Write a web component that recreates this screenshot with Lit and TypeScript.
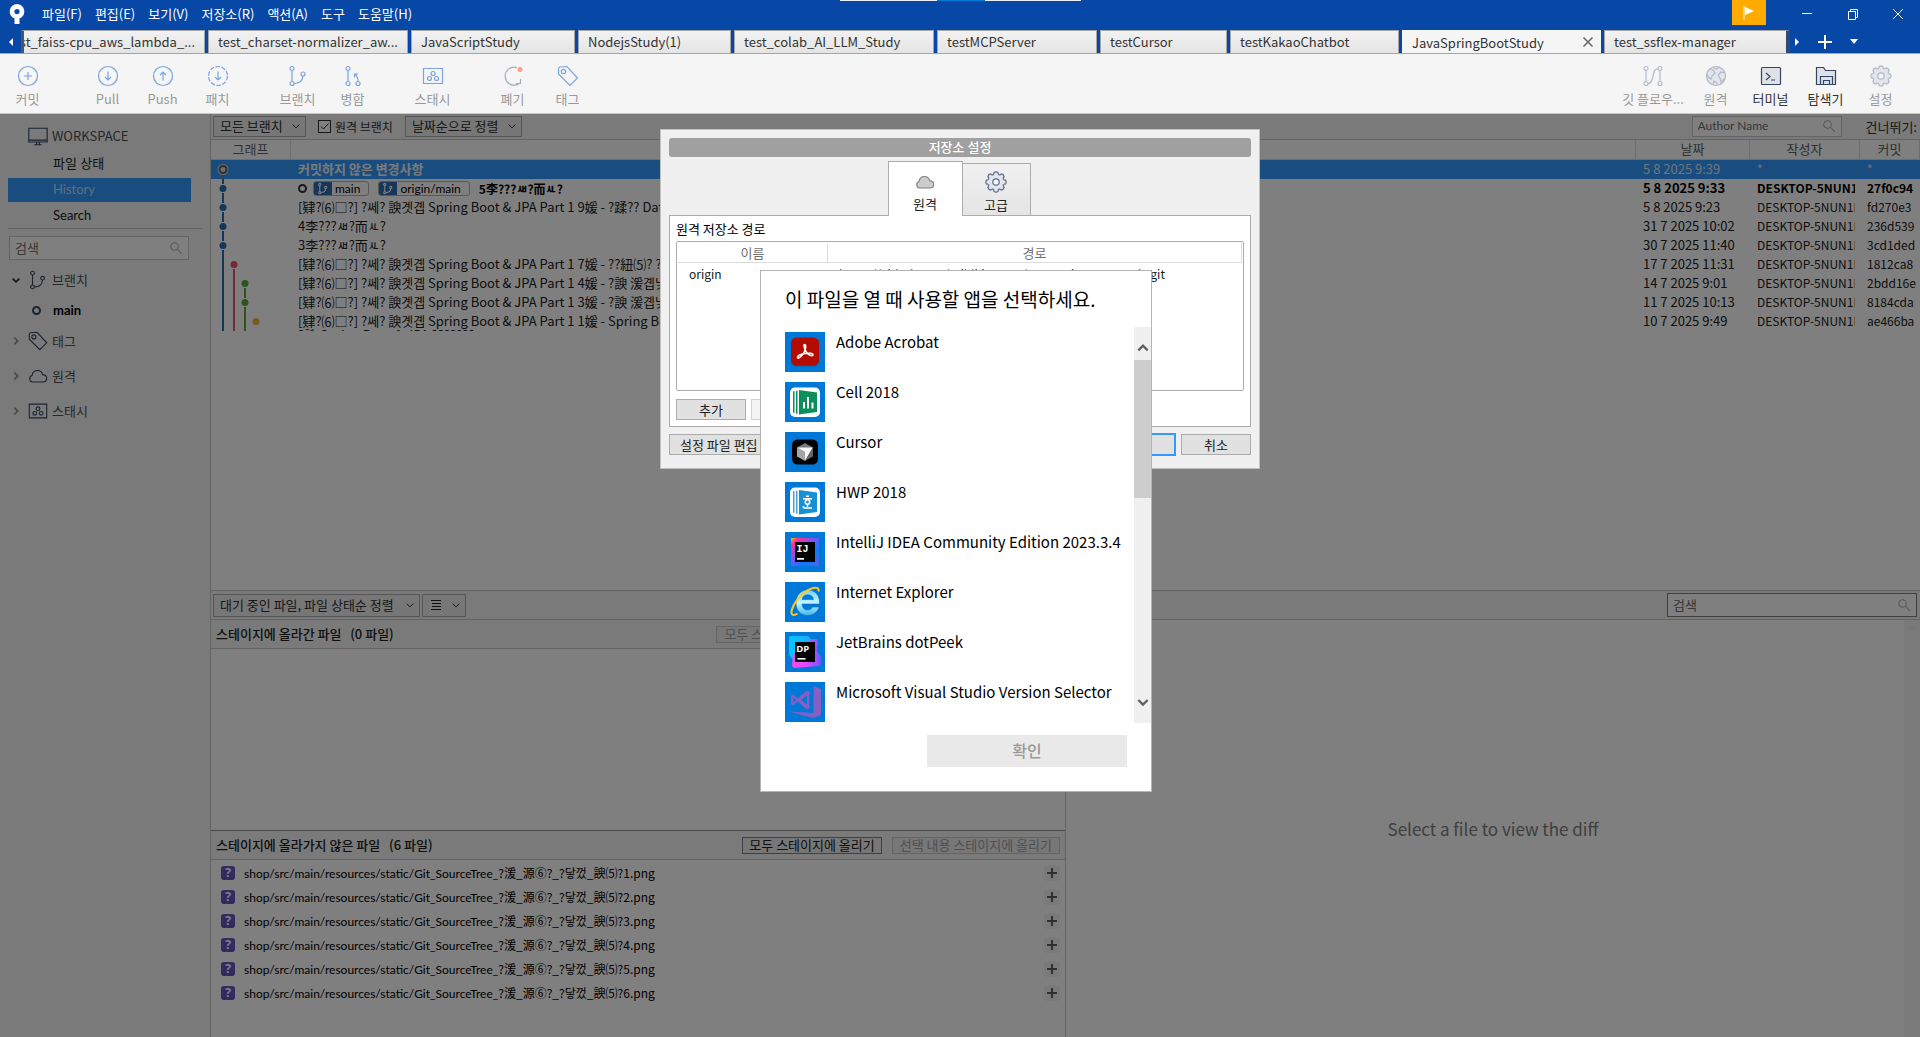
import { LitElement, html, css, svg, nothing } from "lit";
import { customElement } from "lit/decorators.js";
import { classMap } from "lit/directives/class-map.js";

/* ---------- data ---------- */

const MENUS = ["파일(F)", "편집(E)", "보기(V)", "저장소(R)", "액션(A)", "도구", "도움말(H)"];

const TABS = [
  { name: "test_faiss-cpu_aws_lambda_...", width: 184, clipped: true },
  { name: "test_charset-normalizer_aw...", width: 200 },
  { name: "JavaScriptStudy", width: 164 },
  { name: "NodejsStudy(1)", width: 153 },
  { name: "test_colab_AI_LLM_Study", width: 200 },
  { name: "testMCPServer", width: 160 },
  { name: "testCursor", width: 127 },
  { name: "testKakaoChatbot", width: 169 },
  { name: "JavaSpringBootStudy", width: 199, active: true },
  { name: "test_ssflex-manager", width: 186, last: true },
];

const LEFT_TOOLS = [
  [{ icon: "commit", label: "커밋" }],
  [
    { icon: "pull", label: "Pull" },
    { icon: "push", label: "Push" },
    { icon: "fetch", label: "패치" },
  ],
  [
    { icon: "branch", label: "브랜치" },
    { icon: "merge", label: "병합" },
  ],
  [{ icon: "stash", label: "스태시" }],
  [
    { icon: "discard", label: "폐기" },
    { icon: "tag", label: "태그" },
  ],
];

const RIGHT_TOOLS = [
  { icon: "flow", label: "깃 플로우...", wide: true },
  { icon: "globe", label: "원격" },
  { icon: "terminal", label: "터미널", on: true },
  { icon: "explorer", label: "탐색기", on: true },
  { icon: "gear", label: "설정" },
];

const PREFIX = "[肄?⑹□?] ?쎄? 諛곗곕 Spring Boot & JPA Part 1 ";
const COMMITS = [
  { text: "커밋하지 않은 변경사항", date: "5 8 2025 9:39", author: "*", hash: "*", kind: "selected" },
  { text: "5李???ㅽ?而ㅻ?", date: "5 8 2025 9:33", author: "DESKTOP-5NUN1IQ", hash: "27f0c94", kind: "head" },
  { text: PREFIX + "9媛 - ?蹂?? Database", date: "5 8 2025 9:23", author: "DESKTOP-5NUN1IQ", hash: "fd270e3" },
  { text: "4李???ㅽ?而ㅻ?", date: "31 7 2025 10:02", author: "DESKTOP-5NUN1IQ", hash: "236d539" },
  { text: "3李???ㅽ?而ㅻ?", date: "30 7 2025 11:40", author: "DESKTOP-5NUN1IQ", hash: "3cd1ded" },
  { text: PREFIX + "7媛 - ??紐⑸? ??댁", date: "17 7 2025 11:31", author: "DESKTOP-5NUN1IQ", hash: "1812ca8" },
  { text: PREFIX + "4媛 - ?諛 湲곕낯 ?", date: "14 7 2025 9:01", author: "DESKTOP-5NUN1IQ", hash: "2bdd16e" },
  { text: PREFIX + "3媛 - ?諛 湲곕낯 ?", date: "11 7 2025 10:13", author: "DESKTOP-5NUN1IQ", hash: "8184cda" },
  { text: PREFIX + "1媛 - Spring Boot", date: "10 7 2025 9:49", author: "DESKTOP-5NUN1IQ", hash: "ae466ba" },
];

const LANES = [
  { x: 12, color: "#2f6fb5" },
  { x: 23, color: "#e8536a" },
  { x: 34, color: "#5aa83f" },
  { x: 45, color: "#f2b93b" },
];
const COMMIT_LANE = [0, 0, 0, 0, 0, 1, 2, 2, 3];

const FILES = [1, 2, 3, 4, 5, 6].map((n) => ({
  dir: "shop/src/main/resources/static/Git_SourceTree_",
  tail: `?湲_源⑥?_?닿껐_諛⑸?${n}.png`,
}));

const APPS = [
  { name: "Adobe Acrobat", icon: "acrobat" },
  { name: "Cell 2018", icon: "cell" },
  { name: "Cursor", icon: "cursor" },
  { name: "HWP 2018", icon: "hwp" },
  { name: "IntelliJ IDEA Community Edition 2023.3.4", icon: "idea" },
  { name: "Internet Explorer", icon: "ie" },
  { name: "JetBrains dotPeek", icon: "dotpeek" },
  { name: "Microsoft Visual Studio Version Selector", icon: "vs" },
];

/* ---------- icons ---------- */

const gearPath = (() => {
  let d = "";
  const n = 8;
  for (let i = 0; i < n; i++) {
    const a = (i / n) * Math.PI * 2 - Math.PI / 2;
    const p = (r: number, o: number) =>
      `${(12 + r * Math.cos(a + o)).toFixed(2)} ${(12 + r * Math.sin(a + o)).toFixed(2)}`;
    d += `${i ? "L" : "M"}${p(9.8, -0.2)}Q${p(10.8, 0)} ${p(9.8, 0.2)}L${p(8.4, 0.27)}Q${p(7.4, 0.39)} ${p(8.4, 0.52)}`;
  }
  return d + "Z";
})();

const GLYPHS: Record<string, unknown> = {
  commit: svg`<circle cx="12" cy="12" r="9.5"/><path d="M12 8v8M8 12h8"/>`,
  pull: svg`<circle cx="12" cy="12" r="9.5"/><path d="M12 7.5v8.5M9 13l3 3 3-3"/>`,
  push: svg`<circle cx="12" cy="12" r="9.5"/><path d="M12 16.5V8M9 11l3-3 3 3"/>`,
  fetch: svg`<circle cx="12" cy="12" r="9.5" stroke-dasharray="4.5 1.5"/><path d="M12 7.5v8.5M9 13l3 3 3-3"/>`,
  branch: svg`<circle cx="6" cy="4.5" r="2"/><circle cx="6" cy="19.5" r="2"/><circle cx="17" cy="10" r="2"/><path d="M6 6.500v11M8 19.500c5 0 8.500-2 9-7.500"/>`,
  merge: svg`<circle cx="7" cy="4.500" r="2"/><circle cx="7" cy="19.500" r="2"/><circle cx="17" cy="19.500" r="2"/><path d="M7 6.500v11M17 17.500c0-4-1-6-3.500-7.500M13.500 13.500V10H17"/>`,
  stash: svg`<path d="M2.500 4.500h19v15h-19z"/><circle cx="12" cy="9.500" r="2"/><circle cx="8.500" cy="14.500" r="2"/><circle cx="15.500" cy="14.500" r="2"/>`,
  discard: svg`<path d="M16 3.600A9 9 0 1 0 19 19M19.500 15v4.500H15" stroke="#a5adba"/><circle cx="19" cy="5.500" r="2.500" fill="#ff9c8a" stroke="none"/>`,
  tag: svg`<path d="M2.500 4.500l1-1.500 7.500-.5 10.500 11.500-7.500 7.500L2.500 10z"/><circle cx="7.500" cy="7.500" r="2.200"/>`,
  flow: svg`<circle cx="5" cy="4.500" r="2"/><circle cx="5" cy="19.500" r="2"/><circle cx="19" cy="4.500" r="2"/><circle cx="19" cy="19.500" r="2"/><path d="M5 6.500v11M19 6.500v11M7 19.500c7 0 3-15 10-15"/>`,
  globe: svg`<circle cx="12" cy="12" r="9.500" fill="#e1e5ec"/><path d="M6 5l3 1 2 3-3 3-1 3-3-2-1-3M9 3l3 2 4-2M21 9l-4-1-3 3 2 3 1 4 3-3M9 21l1-4 3 2 0 2"/>`,
  terminal: svg`<rect x="2.500" y="3.500" width="19" height="17" rx="1" fill="#dfe1e9"/><path d="M7 9l4 3.500L7 16M12 16h4"/>`,
  explorer: svg`<path d="M2.500 20.500v-17h7l2 3h10v14z" fill="#dfe1e9"/><path d="M6.500 20.500v-8h12v8M9.500 20.500v-4h6v4"/>`,
  gear: svg`<path d=${gearPath} fill="#e1e5ec"/><circle cx="12" cy="12" r="3.200" fill="#f5f5f5"/>`,
  monitor: svg`<path d="M2 3.500h20v15H2zM2 16.500h20M10.500 18.500v2.500M13.500 18.500v2.500M8 21.500h8"/>`,
  cloud: svg`<path d="M6 18.500a3.600 3.600 0 0 1-.5-7C6 7.500 9 6 11.500 6c3 0 5 2 5.500 4.500 3 .2 4.500 2 4.500 4s-1.500 4-4 4z"/>`,
  search: svg`<circle cx="9.500" cy="9.500" r="6.500"/><path d="M14.500 14.500L22 22"/>`,
  down: svg`<path d="M4 8.500l8 8 8-8"/>`,
  right: svg`<path d="M8 4l8 8-8 8"/>`,
  up: svg`<path d="M4 16l8-8 8 8"/>`,
};

const icon = (name: string, cls = "") =>
  html`<svg class="icon ${cls}" viewBox="0 0 24 24" aria-hidden="true">${GLYPHS[name]}</svg>`;

const BOOK = (main: string, light: string) => svg`
  <rect x="5" y="5.500" width="30" height="29.500" rx="5" fill="#fff"/>
  <path d="M8 9.500l1.500-.5v22L8 30.500zM11 9l1.500-.5v23.500l-1.500-.5z" fill=${light}/>
  <path d="M14 8l18 2.500V30l-18 2.500z" fill=${main}/>`;

const APP_ART: Record<string, unknown> = {
  acrobat: svg`
    <rect x="6" y="6.500" width="28" height="28" rx="5.500" fill="#06427f" opacity=".5"/>
    <rect x="6" y="5.500" width="28" height="28" rx="5.500" fill="#b30b00"/>
    <path d="M19.500 12.500c2.200 0 1.200 6-1.500 9.500s-5.300 5-5.500 3.500c-.2-2 4.500-3.500 8-4 4-.6 7.500-.3 7.500 1.300 0 1.700-3.500.7-5.500-1.300-2.700-2.500-4.300-9-3-9z" fill="none" stroke="#fff" stroke-width="1.600"/>`,
  cell: svg`${BOOK("#0b8f5a", "#0b8f5a")}<path d="M18 20h2v6.500h-2zM22 15h2v11.500h-2zM26.500 20.500h2v6h-2z" fill="#fff"/>`,
  cursor: svg`
    <rect x="7" y="7.500" width="26" height="25" rx="5.500" fill="#000"/>
    <path d="M20 11l8 4.500-8 4.500-8-4.500z" fill="#777"/>
    <path d="M12 15.500l8 4.500v9l-8-4.500z" fill="#a5a5a5"/>
    <path d="M28 15.500L20 29v-9l-8-4.500z" fill="#f5f5f5"/>
    <path d="M28 15.500v9L20 29z" fill="#666"/>`,
  hwp: svg`${BOOK("#1791d3", "#4a9fd8")}
    <path d="M21 14.200h3M18 16.700h9M18.500 26h8.500M18.500 24v2M22.500 23v2" stroke="#fff" stroke-width="1.500" fill="none"/>
    <circle cx="22.500" cy="20" r="2.200" stroke="#fff" stroke-width="1.600" fill="none"/>`,
  idea: svg`
    <defs><linearGradient id="ij" x1="0" y1="0" x2="1" y2="1">
      <stop offset="0" stop-color="#fdb60d"/><stop offset=".14" stop-color="#ff318c"/>
      <stop offset=".45" stop-color="#6b57ff"/><stop offset=".7" stop-color="#087cfa"/><stop offset="1" stop-color="#5f5ce6"/>
    </linearGradient></defs>
    <path d="M6 6h28v28H6z" fill="url(#ij)"/><path d="M10 10h20v20H10z" fill="#000"/>
    <text x="11.500" y="20" font-size="10" font-weight="700" font-family="Liberation Mono" fill="#fff">IJ</text>
    <path d="M12 26h7v1.700h-7z" fill="#fff"/>`,
  ie: svg`
    <defs><linearGradient id="ieg" x1="0" y1="0" x2="0" y2="1">
      <stop offset="0" stop-color="#6fd6fb"/><stop offset=".5" stop-color="#c3f3ff"/><stop offset="1" stop-color="#3fb7f0"/></linearGradient></defs>
    <path d="M34.500 22H17c.3 4 2.500 6 5.500 6 2.300 0 4-1 5-3h6.500c-1.500 5.500-6 8.500-11.500 8.500C15.500 33.500 11 28.500 11 21S15.500 8 22.500 8c7.500 0 12.500 5 12 14zM17 17.500h11.500c-.3-3-2.500-4.800-5.700-4.800S17.500 14.500 17 17.500z" fill="url(#ieg)" stroke="#1a74bd" stroke-width=".6"/>
    <path d="M33.500 9.500c1-4-2.500-4.800-8-2.500C17 10.500 9 20 6.800 28c-1.200 5 1.500 6.500 5.700 3.500" fill="none" stroke="#fdc81e" stroke-width="2"/>`,
  dotpeek: svg`
    <defs><linearGradient id="dpa" x1="0" y1="0" x2="1" y2="0"><stop offset="0" stop-color="#00c8ff"/><stop offset="1" stop-color="#22a8ff"/></linearGradient>
    <linearGradient id="dpb" x1="0" y1="0" x2="1" y2="0"><stop offset="0" stop-color="#ff45ed"/><stop offset=".5" stop-color="#e04bff"/><stop offset="1" stop-color="#6b57ff"/></linearGradient></defs>
    <path d="M4 5.500q0-1.500 2-1.500h17l3 3v20H7l-3-5z" fill="url(#dpa)"/>
    <path d="M24 9l3-2h5l1 3-1 9 4 6v8l-2 1-25 2-2-2 1-12 16-5z" fill="url(#dpb)"/>
    <path d="M10 10h20v20H10z" fill="#000"/>
    <text x="11.300" y="19.500" font-size="9.500" font-weight="700" font-family="Open Sans" fill="#fff">DP</text>
    <path d="M12.500 26h8v1.600h-8z" fill="#fff"/>`,
  vs: svg`<path d="M28.500 4l7.500 3v26l-8 3L4 29.500l24.500 1.500zM6 13.500l2-1 5 4 8.500-8 3 1.200v16.600l-3 1.200-8.500-8-5 4-2-1zM8.500 15.500v5l2.500-2.500zM16 18l6 4.500v-9z" fill="#865fc5" fill-rule="evenodd"/>`,
};

/* ---------- component ---------- */

@customElement("app-root")
export class AppRoot extends LitElement {
  static styles = css`
    :host {
      display: block;
      font: 13px/17px "Noto Sans CJK KR", "Noto Sans", sans-serif;
      color: #000;
    }
    * { box-sizing: border-box; }
    button, input, select { font: inherit; color: inherit; margin: 0; padding: 0; border: 0; border-radius: 0; background: none; }
    button { white-space: nowrap; }
    a { color: inherit; text-decoration: none; }
    h1, h2, p, ul { margin: 0; padding: 0; font-size: inherit; font-weight: inherit; }
    ul { list-style: none; }
    table { border-collapse: separate; border-spacing: 0; table-layout: fixed; width: 100%; }
    th, td { padding: 0; font-weight: 400; text-align: left; white-space: nowrap; overflow: hidden; }
    .icon { display: block; width: 24px; height: 24px; flex: none; fill: none; stroke: currentColor; stroke-width: 1.2; }
    .small { width: 12px; height: 12px; stroke-width: 2.4; }
    .latin { font-family: Lato, "Noto Sans CJK KR", sans-serif; }
    .app { position: relative; display: flex; flex-direction: column; height: 100vh; overflow: hidden; background: #fff; }

    /* title bar */
    .titlebar { display: flex; align-items: stretch; height: 30px; background: #0747a6; color: #fff; }
    .logo { width: 18px; height: 22px; margin: 3px 16px 0 8px; }
    .menus { display: flex; gap: 13px; align-items: center; height: 26px; }
    .grip { display: flex; width: 241px; height: 1px; margin-left: auto; background: #e8ecf4; justify-content: center; }
    .grip i { width: 48px; background: #0078d7; }
    .window { flex: 1; display: flex; justify-content: flex-end; max-width: 839px; }
    .flag { width: 34px; height: 25px; margin-right: 18px; background: #ffab00; display: grid; place-items: center; }
    .win { width: 46px; height: 28px; display: grid; place-items: center; }
    .win:last-child { width: 44px; }
    .win svg { width: 14px; height: 14px; fill: none; stroke: #fff; }

    /* tabs */
    .tabs { display: flex; align-items: stretch; height: 24px; background: #0747a6; color: #333; border-bottom: 1px solid #a5a5a5; }
    .scroll { width: 21px; display: grid; place-items: center; flex: none; }
    .scroll svg, .extra svg { fill: #fff; display: block; }
    .strip { display: flex; gap: 3px; overflow: hidden; }
    .tab { flex: none; display: flex; align-items: center; justify-content: space-between; padding: 0 9px 1px; border: 1px solid #a5a5a5; border-bottom: 0; background: linear-gradient(#f2f2f2, #e4e4e4); white-space: nowrap; overflow: hidden; }
    .tab.active { background: #f5f5f5; border-color: #f5f5f5; height: 24px; padding-right: 6px; }
    .tab.clipped { justify-content: flex-end; padding-left: 0; border-left: 3px solid #46566f; }
    .tab.last { border-right: 4px solid #2c4a74; }
    .tab .icon { color: #666; stroke-width: 3; }
    .extra { display: flex; align-items: center; gap: 18px; padding-left: 4px; }

    /* toolbar */
    .toolbar { display: flex; height: 60px; padding-right: 12px; background: #f5f5f5; border-bottom: 1px solid #c8c8c8; color: #999; }
    .group { display: flex; margin-right: 25px; }
    .spacer { flex: 1; }
    .tool { width: 55px; display: flex; flex-direction: column; align-items: center; padding-top: 10px; gap: 2px; }
    .tool.wide { width: 70px; }
    .tool .icon { color: #7ba5de; }
    .right .icon { color: #b3bac5; }
    .right { display: flex; }
    .tool.on { color: #333; }
    .tool.on .icon { color: #344563; }

    /* main area */
    .body { position: relative; flex: 1; min-height: 0; display: flex; }
    .shade { position: absolute; inset: 0; background: rgba(0, 0, 0, 0.5); }
    .side { width: 211px; flex: none; background: #f4f4f4; border-right: 1px solid #c8c8c8; padding: 8px 8px 0; color: #505050; }
    .side .icon { color: #344563; }
    .head { display: flex; align-items: center; gap: 3px; height: 27px; padding-left: 19px; }
    .head .icon { width: 22px; height: 22px; }
    .link { display: flex; align-items: center; height: 24px; width: 183px; padding: 0 0 1px 45px; color: #202020; }
    .link.sel { background: #39f; color: #c4dcf5; }
    .nav { display: flex; flex-direction: column; gap: 2px; padding: 3px 0 0; border-bottom: 1px solid #c8c8c8; }
    .field { display: flex; align-items: center; border: 1px solid #c8c8c8; background: #fff; padding: 0 5px; }
    .field input { flex: 1; min-width: 0; outline: 0; padding-bottom: 1px; }
    .field input::placeholder { color: #707070; opacity: 1; }
    .field .icon { width: 14px; height: 14px; stroke-width: 1.8; color: #b0b0b0; }
    .find { width: 180px; height: 24px; margin: 7px 0 0 1px; }
    .tree { display: flex; align-items: center; height: 35px; }
    .tree .icon { width: 22px; height: 22px; margin: 0 3px 0 6px; }
    .tree .small { width: 10px; height: 10px; margin: 0 0 0 3px; stroke-width: 4; color: #909090; }
    .tree.open { height: 39px; }
    .tree.open .small { color: #303030; }
    .leaf { display: flex; align-items: center; gap: 12px; height: 22px; margin-bottom: 2px; padding-left: 24px; font-weight: 700; color: #000; }
    .ring { width: 9px; height: 9px; border: 2px solid #344563; border-radius: 50%; flex: none; }

    .content { flex: 1; min-width: 0; display: flex; flex-direction: column; }
    .filter { display: flex; align-items: center; height: 26px; padding: 0 3px 1px 2px; background: #f4f4f4; border-bottom: 1px solid #c8c8c8; color: #303030; }
    .pick { display: grid; align-items: center; height: 21px; border: 1px solid #acacac; background: #eee; }
    .pick select { grid-area: 1 / 1; appearance: none; height: 19px; padding: 0 22px 1px 6px; outline: 0; }
    .pick .icon { grid-area: 1 / 1; justify-self: end; margin-right: 4px; width: 10px; height: 10px; pointer-events: none; }
    .check { display: flex; align-items: center; gap: 4px; margin: 0 12px; font-size: 12px; }
    .check input { appearance: none; width: 13px; height: 13px; border: 1px solid #303030; background: #fff; display: grid; grid-area: 1 / 1; }
    .box { display: grid; }
    .box svg { grid-area: 1 / 1; width: 13px; height: 13px; fill: none; stroke: #303030; pointer-events: none; }
    .author { width: 150px; height: 21px; margin: 0 24px 0 auto; font-size: 12px; }

    .log { color: #202020; flex: 1; min-height: 0; overflow: hidden; }
    .log th { height: 20px; padding-bottom: 2px; text-align: center; color: #606060; border-bottom: 1px solid #dcdcdc; border-right: 1px solid #dcdcdc; }
    .log td { height: 19px; padding: 0 0 2px 7px; }
    .log td.graph { padding: 0; }
    .log td.graph svg { display: block; }
    .log td.who span { display: block; width: 98px; overflow: hidden; }
    .log td.who, .log td.hash { font-size: 12px; }
    .log .c0 { width: 80px; }
    .log .c2 { width: 114px; }
    .log .c3 { width: 110px; }
    .log .c4 { width: 60px; }
    .selected td { background: #39f; color: #dceaf8; }
    .selected td.msg { font-weight: 700; color: #f4f4f4; }
    .head-row td { font-weight: 700; color: #000; }
    .log .head-row td.msg { padding-bottom: 0; font-size: 12px; }
    .inline { display: flex; align-items: center; }
    .inline .ring { border-color: #303030; margin-right: 6px; }
    .ref { display: flex; align-items: center; height: 15px; border: 1px solid #b0b0b0; border-radius: 3px; padding-right: 8px; margin-right: 9px; font-weight: 400; gap: 3px; overflow: hidden; }
    .ref .icon { width: 18px; height: 15px; background: #2f6fb5; color: #fff; stroke-width: 2; padding: 1px; }
    .log .sliver td { height: 2px; padding-bottom: 0; }
    .sliver span { display: block; height: 2px; line-height: 11px; overflow: hidden; }
    .log .last-row td { height: 17px; padding-bottom: 0; line-height: 15px; }
    .last-row svg { height: 17px; }

    .bar { display: flex; align-items: center; justify-content: space-between; height: 30px; padding: 0 3px 0 2px; border-top: 1px solid #c8c8c8; border-bottom: 1px solid #c8c8c8; background: #f4f4f4; color: #303030; flex: none; }
    .set { display: flex; gap: 2px; }
    .bar .pick { height: 23px; }
    .bar .set .wide-pick select { padding-right: 25px; }
    .bar .modes select { width: 42px; color: transparent; }
    .modes .lines { grid-area: 1 / 1; width: 10px; height: 12px; margin-left: 8px; pointer-events: none; stroke: #202020; }
    .bar .field { width: 250px; height: 24px; border-color: #808080; }
    .lower { display: flex; height: 417px; flex: none; }
    .stage { width: 855px; flex: none; display: flex; flex-direction: column; border-right: 1px solid #c8c8c8; }
    .pane { display: flex; flex-direction: column; height: 210px; }
    .pane.rest { flex: 1; border-top: 1px solid #909090; }
    .title { display: flex; align-items: center; gap: 10px; height: 29px; padding: 0 5px; background: #f4f4f4; border-bottom: 1px solid #c8c8c8; color: #202020; flex: none; }
    .title h2 { font-weight: 500; margin-right: auto; padding-bottom: 2px; white-space: pre; }
    .mini { height: 17px; line-height: 13px; padding: 0 6px 2px; border: 1px solid #808080; background: #eee; }
    .mini:disabled { padding: 0 7px 2px; color: #a0a0a0; border-color: #c8c8c8; }
    .files { padding-top: 1px; font-size: 12px; }
    .file { display: flex; align-items: center; height: 24px; padding: 0 5px 0 10px; }
    .badge { width: 14px; height: 14px; border-radius: 3px; margin-right: 9px; background: #6554c0; color: #fff; display: grid; place-items: center; font: 700 12px/14px "Noto Sans", sans-serif; }
    .add { width: 16px; height: 16px; margin-left: auto; border-radius: 3px; background: #f4f4f4; display: grid; place-items: center; }
    .add svg { width: 10px; height: 10px; stroke: #606060; stroke-width: 2; }
    .diff { flex: 1; display: grid; place-items: center; font-size: 17px; line-height: 24px; color: #808080; }
    .diff p, .rail { grid-area: 1 / 1; }
    .rail { width: 16px; background: #f4f4f4; place-self: stretch end; display: flex; justify-content: center; padding-top: 3px; }
    .rail .icon { color: #c8c8c8; width: 10px; height: 10px; }

    /* repository settings window */
    .dialog { position: absolute; left: calc(50% - 300px); top: 129px; width: 600px; padding: 8px; display: flex; flex-direction: column; background: #f0f0f0; border: 1px solid #c0c0c0; color: #202020; }
    .dialog h1 { height: 19px; border-radius: 3px; background: #a0a0a0; color: #fff; text-align: center; font-weight: 500; }
    .dtabs { display: flex; justify-content: center; align-items: flex-end; height: 58px; padding-top: 5px; padding-right: 2px; }
    .dtab { width: 68px; height: 52px; padding-top: 4px; border: 1px solid #acacac; border-left: 0; border-bottom: 0; background: linear-gradient(#f0f0f0, #e5e5e5); display: flex; flex-direction: column; align-items: center; justify-content: center; gap: 2px; }
    .dtab.on { width: 75px; height: 55px; background: #fff; border-left: 1px solid #acacac; position: relative; margin-bottom: -1px; }
    .dtab .icon { color: #5e6c84; }
    .dtab.on .icon { color: #808080; fill: #ccc; width: 22px; height: 22px; }
    .panel { height: 212px; border: 1px solid #acacac; background: #fff; padding: 4px 6px 6px; display: flex; flex-direction: column; }
    .panel h2 { height: 19px; color: #000; }
    .list { height: 150px; margin-top: 2px; border: 1px solid #acacac; border-radius: 2px; padding: 1px; }
    .list th { height: 20px; text-align: center; color: #707070; border-right: 1px solid #dcdcdc; border-bottom: 1px solid #dcdcdc; }
    .list td { height: 20px; padding-left: 11px; font-size: 12px; }
    .list .n { width: 150px; }
    .row { display: flex; gap: 5px; margin-top: 8px; }
    .btn { min-width: 70px; height: 21px; padding: 0 10px 1px; border: 1px solid #acacac; background: #e1e1e1; }
    .btn:disabled { background: #f4f4f4; border-color: #d0d0d0; color: #a0a0a0; }
    .btn.ok { border: 2px solid #39f; margin-left: auto; height: 23px; margin-top: -1px; }
    .btn.edit { width: 110px; text-align: left; }
    .foot { margin-top: 7px; margin-bottom: 4px; }

    /* app chooser window */
    .chooser { position: absolute; left: calc(50% - 200px); top: 270px; width: 392px; height: 522px; padding: 14px 0 24px; display: flex; flex-direction: column; background: #fff; border: 1px solid #b4b4b4; }
    .chooser h1 { padding-left: 24px; font-size: 19px; line-height: 28px; }
    .apps { display: flex; margin-top: 14px; height: 396px; }
    .apps ul { flex: 1; padding: 5px 0 0 24px; display: flex; flex-direction: column; gap: 10px; overflow: hidden; }
    .app-item { display: flex; gap: 11px; font-size: 15px; line-height: 20px; text-align: left; height: 40px; flex: none; }
    .app-item svg { width: 40px; height: 40px; background: #0078d7; flex: none; }
    .track { width: 17px; display: flex; flex-direction: column; align-items: center; background: #f0f0f0; }
    .track .icon { width: 14px; height: 14px; color: #606060; stroke-width: 4; }
    .track .top { height: 33px; display: flex; align-items: flex-end; padding-bottom: 5px; }
    .thumb { width: 17px; height: 138px; background: #cdcdcd; }
    .track .end { margin-top: auto; padding-bottom: 14px; }
    .confirm { align-self: flex-end; width: 200px; height: 32px; margin: 12px 24px 0 0; padding-bottom: 2px; background: #e9e9e9; color: #999; font-size: 16px; font-weight: 500; line-height: 30px; }
  `;

  private tool(t: { icon: string; label: string; wide?: boolean; on?: boolean }) {
    return html`<button class=${classMap({ tool: true, wide: !!t.wide, on: !!t.on })}>${icon(t.icon)}<span>${t.label}</span></button>`;
  }

  private pick(id: string, text: string, cls = "") {
    return html`<div class="pick ${cls}"><select id=${id} aria-label=${text}><option>${text}</option></select>${icon("down", "small")}</div>`;
  }

  private graph(i: number) {
    const lane = COMMIT_LANE[i];
    const lines = LANES.slice(0, 3).map((l, n) => {
      const first = COMMIT_LANE.indexOf(n);
      if (i < first) return nothing;
      const own = lane === n;
      if (!own) return svg`<path d="M${l.x} 0V19" stroke=${l.color} stroke-width="2"/>`;
      return svg`${i > first ? svg`<path d="M${l.x} 0V5" stroke=${l.color} stroke-width="2"/>` : nothing}
        <path d="M${l.x} 14V19" stroke=${i === 0 ? "#808080" : l.color} stroke-width="2"/>`;
    });
    const at = LANES[lane];
    return html`<svg width="79" height="19" viewBox="0 0 79 19" preserveAspectRatio="xMinYMin slice">${lines}
      ${i === 0
        ? svg`<circle cx="12" cy="9.500" r="5.500" fill="#d8d8d8"/><circle cx="12" cy="9.500" r="3.500" fill="#d8d8d8" stroke="#606060" stroke-width="2"/>`
        : svg`<circle cx=${at.x} cy="9.500" r="3.500" fill=${at.color}/>`}</svg>`;
  }

  private renderTop() {
    return html`
      <header class="titlebar">
        <svg class="logo" viewBox="0 0 18 22"><path d="M9 1a7.500 7.500 0 0 1 2.500 14.500V21h-5v-5.500A7.500 7.500 0 0 1 9 1zm0 5a2.500 2.500 0 1 0 0 5.200A2.500 2.500 0 0 0 9 6z" fill="#fff" fill-rule="evenodd"/></svg>
        <nav class="menus">${MENUS.map((m) => html`<button>${m}</button>`)}</nav>
        <div class="grip"><i></i></div>
        <div class="window">
          <button class="flag" aria-label="알림"><svg width="14" height="16" viewBox="0 0 14 16"><path d="M2 1v14" stroke="#fff"/><path d="M3 2l9 4-9 4z" fill="#fff"/></svg></button>
          <button class="win" aria-label="최소화"><svg viewBox="0 0 14 14"><path d="M2 6.500h10"/></svg></button>
          <button class="win" aria-label="복원"><svg viewBox="0 0 14 14"><path d="M2.500 4.500h7v8h-7zM4.500 4.500v-2h7v8h-2"/></svg></button>
          <button class="win" aria-label="닫기"><svg viewBox="0 0 14 14"><path d="M2 2l10 10M12 2L2 12"/></svg></button>
        </div>
      </header>
      <div class="tabs">
        <button class="scroll" aria-label="이전 탭"><svg width="6" height="8"><path d="M5 0v8L1 4z"/></svg></button>
        <div class="strip">
          ${TABS.map(
            (t) => html`<button class=${classMap({ tab: true, active: !!t.active, clipped: !!t.clipped, last: !!t.last })} style="width:${t.width}px">
              <span>${t.name}</span>${t.active ? html`<svg class="icon small" viewBox="0 0 24 24"><path d="M3 3l18 18M21 3L3 21"/></svg>` : nothing}
            </button>`,
          )}
        </div>
        <div class="extra">
          <button aria-label="다음 탭"><svg width="6" height="8"><path d="M1 0v8l4-4z"/></svg></button>
          <button aria-label="새 탭"><svg width="14" height="14"><path d="M6 0h2v14H6zM0 6h14v2H0z"/></svg></button>
          <button aria-label="탭 목록"><svg width="8" height="5"><path d="M0 0h8L4 5z"/></svg></button>
        </div>
      </div>
      <div class="toolbar">
        ${LEFT_TOOLS.map((g) => html`<div class="group">${g.map((t) => this.tool(t))}</div>`)}
        <div class="spacer"></div>
        <div class="right">${RIGHT_TOOLS.map((t) => this.tool(t))}</div>
      </div>`;
  }

  private renderSide() {
    return html`<aside class="side">
      <div class="head">${icon("monitor")}<span>WORKSPACE</span></div>
      <nav class="nav latin">
        <a class="link" href="#status">파일 상태</a>
        <a class="link sel" href="#history">History</a>
        <a class="link" href="#search">Search</a>
      </nav>
      <div class="field find"><input aria-label="검색" placeholder="검색" />${icon("search")}</div>
      <div class="tree open">${icon("down", "small")}${icon("branch")}<span>브랜치</span></div>
      <div class="leaf latin"><i class="ring"></i><span>main</span></div>
      <div class="tree">${icon("right", "small")}${icon("tag")}<span>태그</span></div>
      <div class="tree">${icon("right", "small")}${icon("cloud")}<span>원격</span></div>
      <div class="tree">${icon("right", "small")}${icon("stash")}<span>스태시</span></div>
    </aside>`;
  }

  private renderLog() {
    return html`
      <div class="filter">
        ${this.pick("branches", "모든 브랜치")}
        <label class="check"><span class="box"><input type="checkbox" checked /><svg viewBox="0 0 13 13"><path d="M3 6.500L5.500 9 10.500 3.500"/></svg></span>원격 브랜치</label>
        ${this.pick("order", "날짜순으로 정렬")}
        <div class="field author latin"><input aria-label="Author Name" placeholder="Author Name" />${icon("search")}</div>
        <span>건너뛰기:</span>
      </div>
      <div class="log">
        <table>
          <colgroup><col class="c0" /><col /><col class="c2" /><col class="c3" /><col class="c4" /></colgroup>
          <thead><tr><th>그래프</th><th></th><th>날짜</th><th>작성자</th><th>커밋</th></tr></thead>
          <tbody>
            ${COMMITS.map(
              (c, i) => html`<tr class=${classMap({ selected: c.kind === "selected", "head-row": c.kind === "head", "last-row": i === 8 })}>
                <td class="graph">${this.graph(i)}</td>
                <td class="msg">${c.kind === "head"
                  ? html`<div class="inline"><i class="ring"></i><span class="ref latin">${icon("branch")}main</span><span class="ref latin">${icon("branch")}origin/main</span>${c.text}</div>`
                  : c.text}</td>
                <td>${c.date}</td><td class="who"><span>${c.author}</span></td><td class="hash">${c.hash}</td>
              </tr>`,
            )}
            <tr class="sliver"><td class="graph"><svg width="79" height="2">${LANES.slice(0, 3).map((l) => svg`<path d="M${l.x} 0V2" stroke=${l.color} stroke-width="2"/>`)}</svg></td><td><span>?諛 Spring Boot &amp; JPA ???????</span></td><td></td><td></td><td></td></tr>
          </tbody>
        </table>
      </div>`;
  }

  private renderLower() {
    return html`
      <div class="bar">
        <div class="set">
          ${this.pick("sort", "대기 중인 파일, 파일 상태순 정렬", "wide-pick")}
          <div class="pick modes"><select aria-label="보기 방식"><option></option></select><svg class="lines" viewBox="0 0 10 12"><path d="M0 1.500h10M1 4.500h9M1 7.500h9M0 10.500h10"/></svg>${icon("down", "small")}</div>
        </div>
        <div class="field"><input aria-label="파일 검색" placeholder="검색" />${icon("search")}</div>
      </div>
      <div class="lower">
        <div class="stage">
          <section class="pane">
            <div class="title"><h2>스테이지에 올라간 파일   (0 파일)</h2><button class="mini" disabled>모두 스테이지에서 내리기</button><button class="mini" disabled>선택 내용 스테이지에서 내리기</button></div>
          </section>
          <section class="pane rest">
            <div class="title"><h2>스테이지에 올라가지 않은 파일   (6 파일)</h2><button class="mini">모두 스테이지에 올리기</button><button class="mini" disabled>선택 내용 스테이지에 올리기</button></div>
            <ul class="files">
              ${FILES.map((f) => html`<li class="file"><span class="badge">?</span><span><span class="latin">${f.dir}</span>${f.tail}</span><button class="add" aria-label="올리기"><svg viewBox="0 0 10 10"><path d="M5 0v10M0 5h10"/></svg></button></li>`)}
            </ul>
          </section>
        </div>
        <div class="diff"><p>Select a file to view the diff</p><div class="rail">${icon("up")}</div></div>
      </div>`;
  }

  private renderDialogs() {
    return html`
      <section class="dialog" role="dialog" aria-label="저장소 설정">
        <h1>저장소 설정</h1>
        <div class="dtabs">
          <button class="dtab on">${icon("cloud")}<span>원격</span></button>
          <button class="dtab">${icon("gear")}<span>고급</span></button>
        </div>
        <div class="panel">
          <h2>원격 저장소 경로</h2>
          <div class="list">
            <table>
              <colgroup><col class="n" /><col /></colgroup>
              <thead><tr><th>이름</th><th>경로</th></tr></thead>
              <tbody><tr><td>origin</td><td>https://github.com/mildkim2057/JavaSpringBootStudy.git</td></tr></tbody>
            </table>
          </div>
          <div class="row"><button class="btn">추가</button><button class="btn" disabled>편집</button><button class="btn" disabled>제거</button></div>
        </div>
        <div class="row foot"><button class="btn edit">설정 파일 편집</button><button class="btn ok">확인</button><button class="btn">취소</button></div>
      </section>
      <section class="chooser" role="dialog" aria-label="앱 선택">
        <h1>이 파일을 열 때 사용할 앱을 선택하세요.</h1>
        <div class="apps">
          <ul>
            ${APPS.map((a) => html`<li><button class="app-item"><svg viewBox="0 0 40 40">${APP_ART[a.icon]}</svg><span>${a.name}</span></button></li>`)}
          </ul>
          <div class="track"><div class="top">${icon("up")}</div><div class="thumb"></div><div class="end">${icon("down")}</div></div>
        </div>
        <button class="confirm" disabled>확인</button>
      </section>`;
  }

  render() {
    return html`<div class="app">
      ${this.renderTop()}
      <main class="body">
        ${this.renderSide()}
        <div class="content">${this.renderLog()}${this.renderLower()}</div>
        <div class="shade"></div>
      </main>
      ${this.renderDialogs()}
    </div>`;
  }
}
